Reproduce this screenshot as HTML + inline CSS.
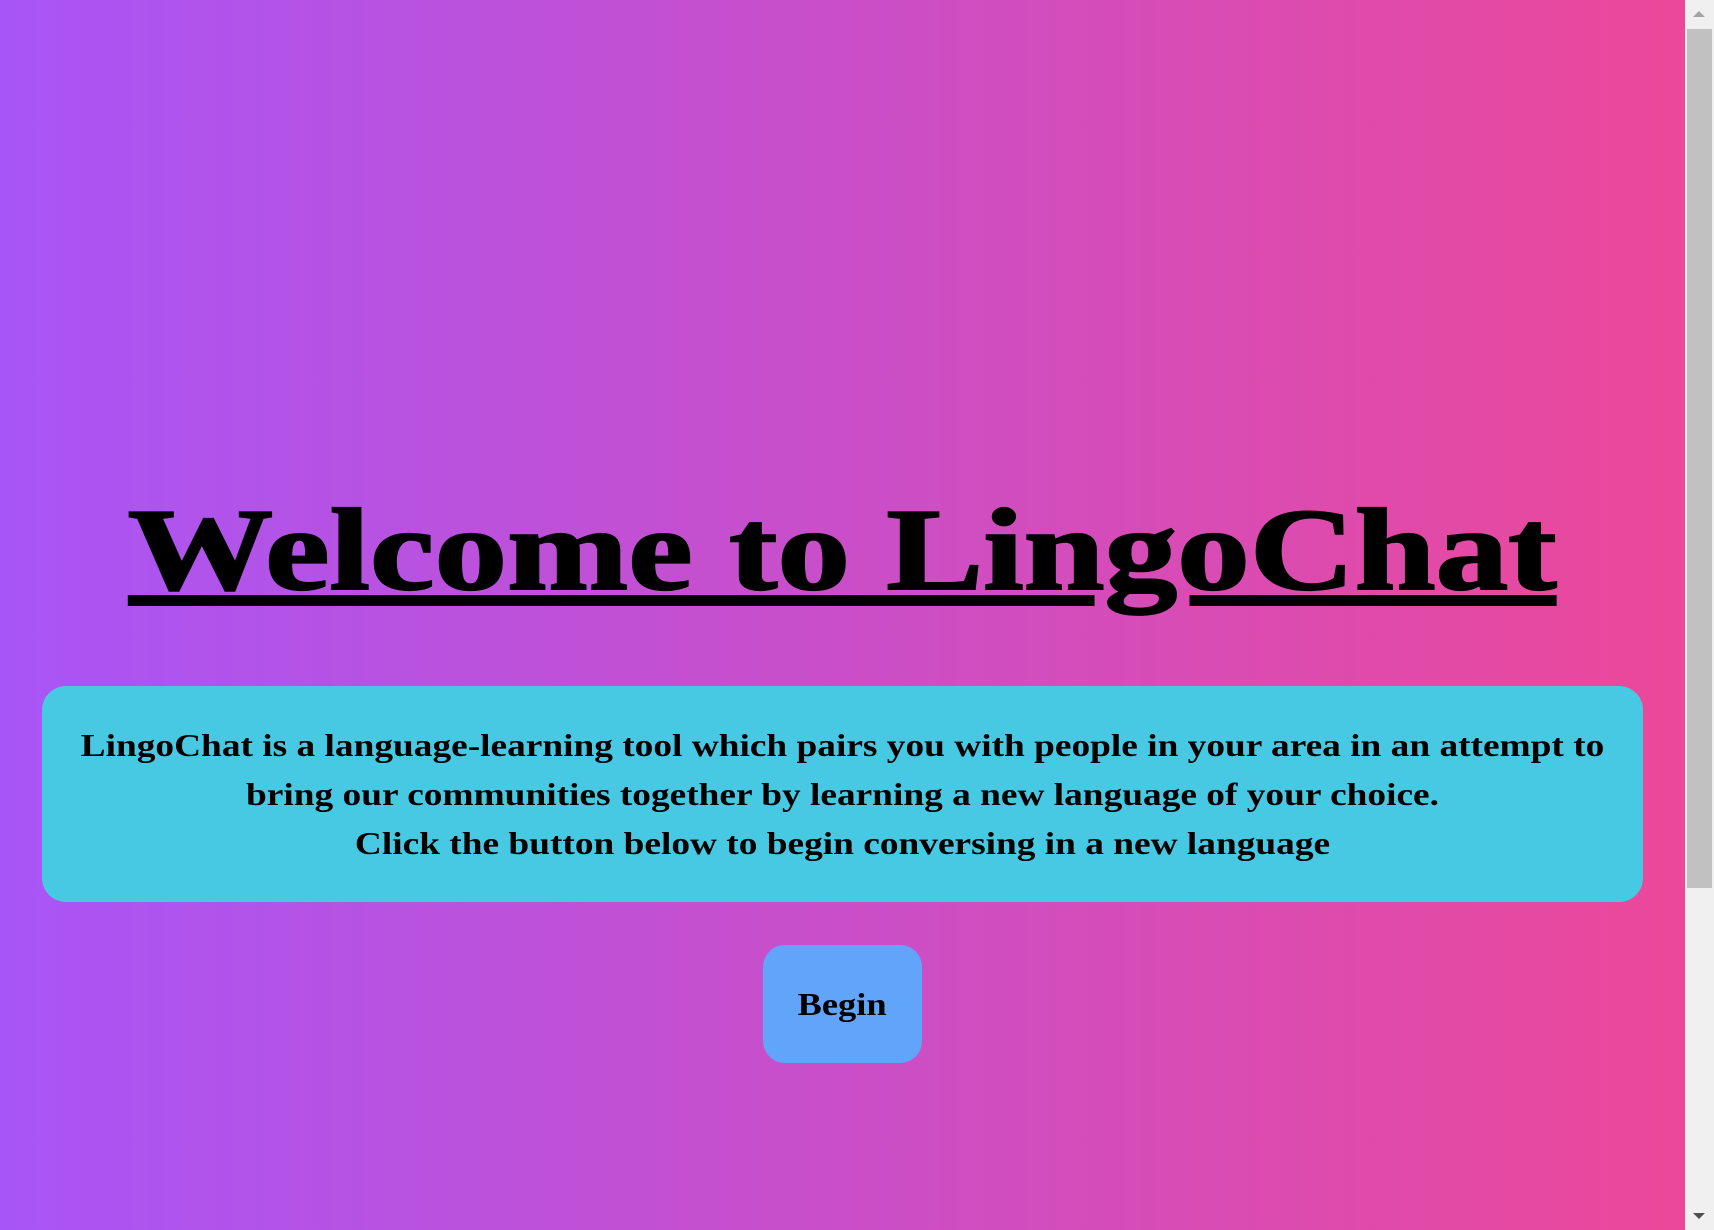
<!DOCTYPE html>
<html><head><meta charset="utf-8"><style>
html,body{margin:0;padding:0;overflow:hidden}
body{width:1714px;height:1230px;position:relative;font-family:"Liberation Serif",serif;}
.page{position:absolute;left:0;top:0;width:1685px;height:1230px;background:linear-gradient(to right,#a855f7,#ec4899);}
h1{position:absolute;left:0;width:1685px;top:481px;margin:0;text-align:center;font-size:117px;font-weight:900;line-height:140px;color:#000;}
h1 span{display:inline-block;transform:scaleX(1.242);text-decoration:underline;text-decoration-thickness:11px;text-underline-offset:6px;-webkit-text-stroke:2px #000;}
.box{position:absolute;left:42px;top:686px;width:1601px;height:216px;background:#48c9e3;border-radius:24px;text-align:center;font-weight:bold;font-size:32px;line-height:49px;box-sizing:border-box;padding-top:35px}
.box div{transform:scaleX(1.167)}
.btn{position:absolute;left:763px;top:945px;width:159px;height:118px;background:#60a5fa;border-radius:22px;text-align:center;line-height:118px;font-weight:bold;font-size:32px}
.btn span{display:inline-block;transform:scaleX(1.14)}
.sb{position:absolute;left:1685px;top:0;width:29px;height:1230px;background:#f0f0f0}
.thumb{position:absolute;left:2px;top:29px;width:25px;height:859px;background:#c1c1c1}
.up{position:absolute;left:8px;top:11px;border-left:6px solid transparent;border-right:6px solid transparent;border-bottom:6px solid #a3a3a3}
.dn{position:absolute;left:8px;bottom:11px;border-left:6px solid transparent;border-right:6px solid transparent;border-top:6px solid #505050}
</style></head><body>
<div class="page">
<h1><span>Welcome to LingoChat</span></h1>
<div class="box"><div>LingoChat is a language-learning tool which pairs you with people in your area in an attempt to<br>bring our communities together by learning a new language of your choice.<br>Click the button below to begin conversing in a new language</div></div>
<div class="btn"><span>Begin</span></div>
</div>
<div class="sb"><div class="up"></div><div class="thumb"></div><div class="dn"></div></div>
</body></html>
